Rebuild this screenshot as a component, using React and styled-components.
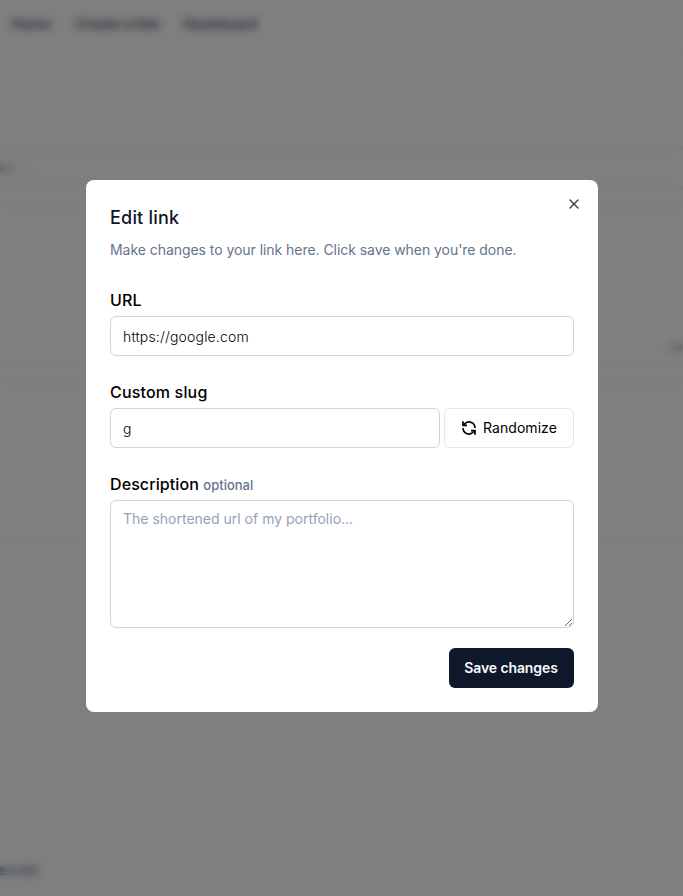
import React from "react";
import styled, { createGlobalStyle } from "styled-components";
import { X } from "lucide-react";

const GlobalStyle = createGlobalStyle`
  *, *::before, *::after { box-sizing: border-box; }
  body { margin: 0; background: #fff; color: #000; overflow: hidden; font-family: Inter, sans-serif; }
  h2, p { margin: 0; }
  button, input, textarea { font-family: inherit; }
`;

const Page = styled.div`
  height: 896px;
  display: flex;
  flex-direction: column;
  overflow: hidden;
`;

const Nav = styled.nav`
  height: 54px;
  flex: none;
  display: flex;
  align-items: center;
  gap: 24px;
  padding: 0 11.5px 6px;
  border-bottom: 1px solid #f1f5f9;
  font-size: 14px;
  font-weight: 600;
  color: #475569;
`;

const Main = styled.main`
  flex: 1;
  padding-top: 94px;
`;

const Search = styled.div`
  height: 40px;
  margin: 0 -20px;
  border: 1px solid #d8e0ea;
  display: flex;
  align-items: center;
  color: #94a3b8;
  font-size: 14px;
  padding-bottom: 1px;
`;

const SearchHint = styled.span`
  width: 56px;
  display: flex;
  justify-content: flex-end;
  gap: 4px;
  white-space: nowrap;
`;

const Dots = styled.span`
  letter-spacing: 2px;
`;

const LinkCard = styled.section`
  height: 160px;
  margin: ${({ $gap }) => $gap}px -20px 0;
  padding: 0 0 10px;
  border: 1px solid #e2e8f0;
  display: flex;
  align-items: flex-end;
  justify-content: flex-end;
`;

const CardDate = styled.span`
  width: 35px;
  white-space: nowrap;
  font-size: 13px;
  line-height: 18px;
  color: #94a3b8;
`;

const Footer = styled.footer`
  width: 41px;
  height: 51px;
  display: flex;
  justify-content: flex-end;
  white-space: nowrap;
  font-size: 14px;
  line-height: 50px;
  font-weight: 500;
  color: #64748b;
`;

const Overlay = styled.div`
  position: fixed;
  inset: 0;
  display: grid;
  place-items: center;
  padding-left: 1px;
  padding-bottom: 4px;
  background: rgba(0, 0, 0, 0.5);
  backdrop-filter: blur(4px);
`;

const Dialog = styled.div`
  position: relative;
  width: 512px;
  height: 532px;
  padding: 24px;
  border-radius: 8px;
  background: #fff;
`;

const CloseButton = styled.button`
  position: absolute;
  top: 16px;
  right: 16px;
  width: 16px;
  height: 16px;
  padding: 0;
  border: 0;
  background: none;
  color: #000;
  opacity: 0.75;
  svg { display: block; }
`;

const Title = styled.h2`
  font-size: 18px;
  line-height: 28px;
  font-weight: 500;
  letter-spacing: 0.2px;
  color: #0f172a;
`;

const Subtitle = styled.p`
  margin-top: 8px;
  font-size: 14px;
  line-height: 20px;
  letter-spacing: -0.05px;
  color: #64748b;
`;

const Form = styled.form`
  display: flex;
  flex-direction: column;
  gap: 24px;
  margin-top: 28px;
`;

const Field = styled.div`
  display: flex;
  flex-direction: column;
  gap: 4px;
`;

const Label = styled.label`
  height: 24px;
  font-size: 16px;
  line-height: 24px;
  font-weight: 500;
  letter-spacing: ${({ $spacing = 0.1 }) => $spacing}px;
`;

const Optional = styled.span`
  font-size: 13px;
  line-height: 1;
  font-weight: 550;
  letter-spacing: 0;
  color: #64748b;
`;

const Input = styled.input`
  width: 100%;
  min-width: 0;
  height: 40px;
  padding: 0 12px;
  border: 1px solid #cbd5e1;
  border-radius: 6px;
  background: #fff;
  color: #000;
  font-size: 14px;
  font-weight: 300;
  letter-spacing: 0.17px;
  outline: none;
`;

const SlugRow = styled.div`
  display: flex;
  gap: 4px;
`;

const RandomizeButton = styled.button`
  flex: none;
  width: 130px;
  height: 40px;
  display: flex;
  align-items: center;
  justify-content: center;
  gap: 6px;
  padding: 0;
  border: 1px solid #e2e8f0;
  border-radius: 6px;
  background: #fff;
  color: #000;
  font-size: 14px;
  letter-spacing: 0.05px;
`;

const ButtonText = styled.span`
  padding-bottom: 2px;
`;

const Textarea = styled.textarea`
  display: block;
  width: 100%;
  height: 128px;
  padding: 8px 12px;
  border: 1px solid #cbd5e1;
  border-radius: 6px;
  background: #fff;
  font-size: 14px;
  line-height: 20px;
  resize: vertical;
  outline: none;
  &::placeholder { color: #94a3b8; }
`;

const Actions = styled.div`
  display: flex;
  justify-content: flex-end;
  margin-top: -4px;
`;

const SaveButton = styled.button`
  width: 125px;
  height: 40px;
  padding: 0 1px 2px 0;
  border: 0;
  border-radius: 6px;
  background: #0f172a;
  color: #f8fafc;
  font-size: 14px;
  font-weight: 600;
  letter-spacing: -0.1px;
`;

function RefreshIcon() {
  return (
    <svg width="16" height="16" viewBox="0 0 24 24" fill="none" stroke="currentColor" strokeWidth="2.5" strokeLinecap="butt" strokeLinejoin="miter">
      <path d="M3 2v6h6" />
      <path d="M21 12A9 9 0 0 0 6 5.3L3 8" />
      <path d="M21 22v-6h-6" />
      <path d="M3 12a9 9 0 0 0 15 6.7l3-2.7" />
    </svg>
  );
}

export default function App() {
  return (
    <>
      <GlobalStyle />
      <Page>
        <Nav>
          <span>Home</span>
          <span>Create a link</span>
          <span>Dashboard</span>
        </Nav>
        <Main>
          <Search><SearchHint>links<Dots>...</Dots></SearchHint></Search>
          <LinkCard $gap={18}><CardDate>Jan</CardDate></LinkCard>
          <LinkCard $gap={16} />
        </Main>
        <Footer>reserved.</Footer>
      </Page>
      <Overlay>
        <Dialog role="dialog" aria-modal="true">
          <Title>Edit link</Title>
          <Subtitle>Make changes to your link here. Click save when you're done.</Subtitle>
          <Form>
            <Field>
              <Label htmlFor="url">URL</Label>
              <Input id="url" defaultValue="https://google.com" />
            </Field>
            <Field>
              <Label htmlFor="slug" $spacing={0.17}>Custom slug</Label>
              <SlugRow>
                <Input id="slug" defaultValue="g" />
                <RandomizeButton type="button">
                  <RefreshIcon />
                  <ButtonText>Randomize</ButtonText>
                </RandomizeButton>
              </SlugRow>
            </Field>
            <Field>
              <Label htmlFor="description">Description <Optional>optional</Optional></Label>
              <Textarea id="description" placeholder="The shortened url of my portfolio..." />
            </Field>
            <Actions><SaveButton type="button">Save changes</SaveButton></Actions>
          </Form>
          <CloseButton aria-label="Close"><X size={16} /></CloseButton>
        </Dialog>
      </Overlay>
    </>
  );
}
